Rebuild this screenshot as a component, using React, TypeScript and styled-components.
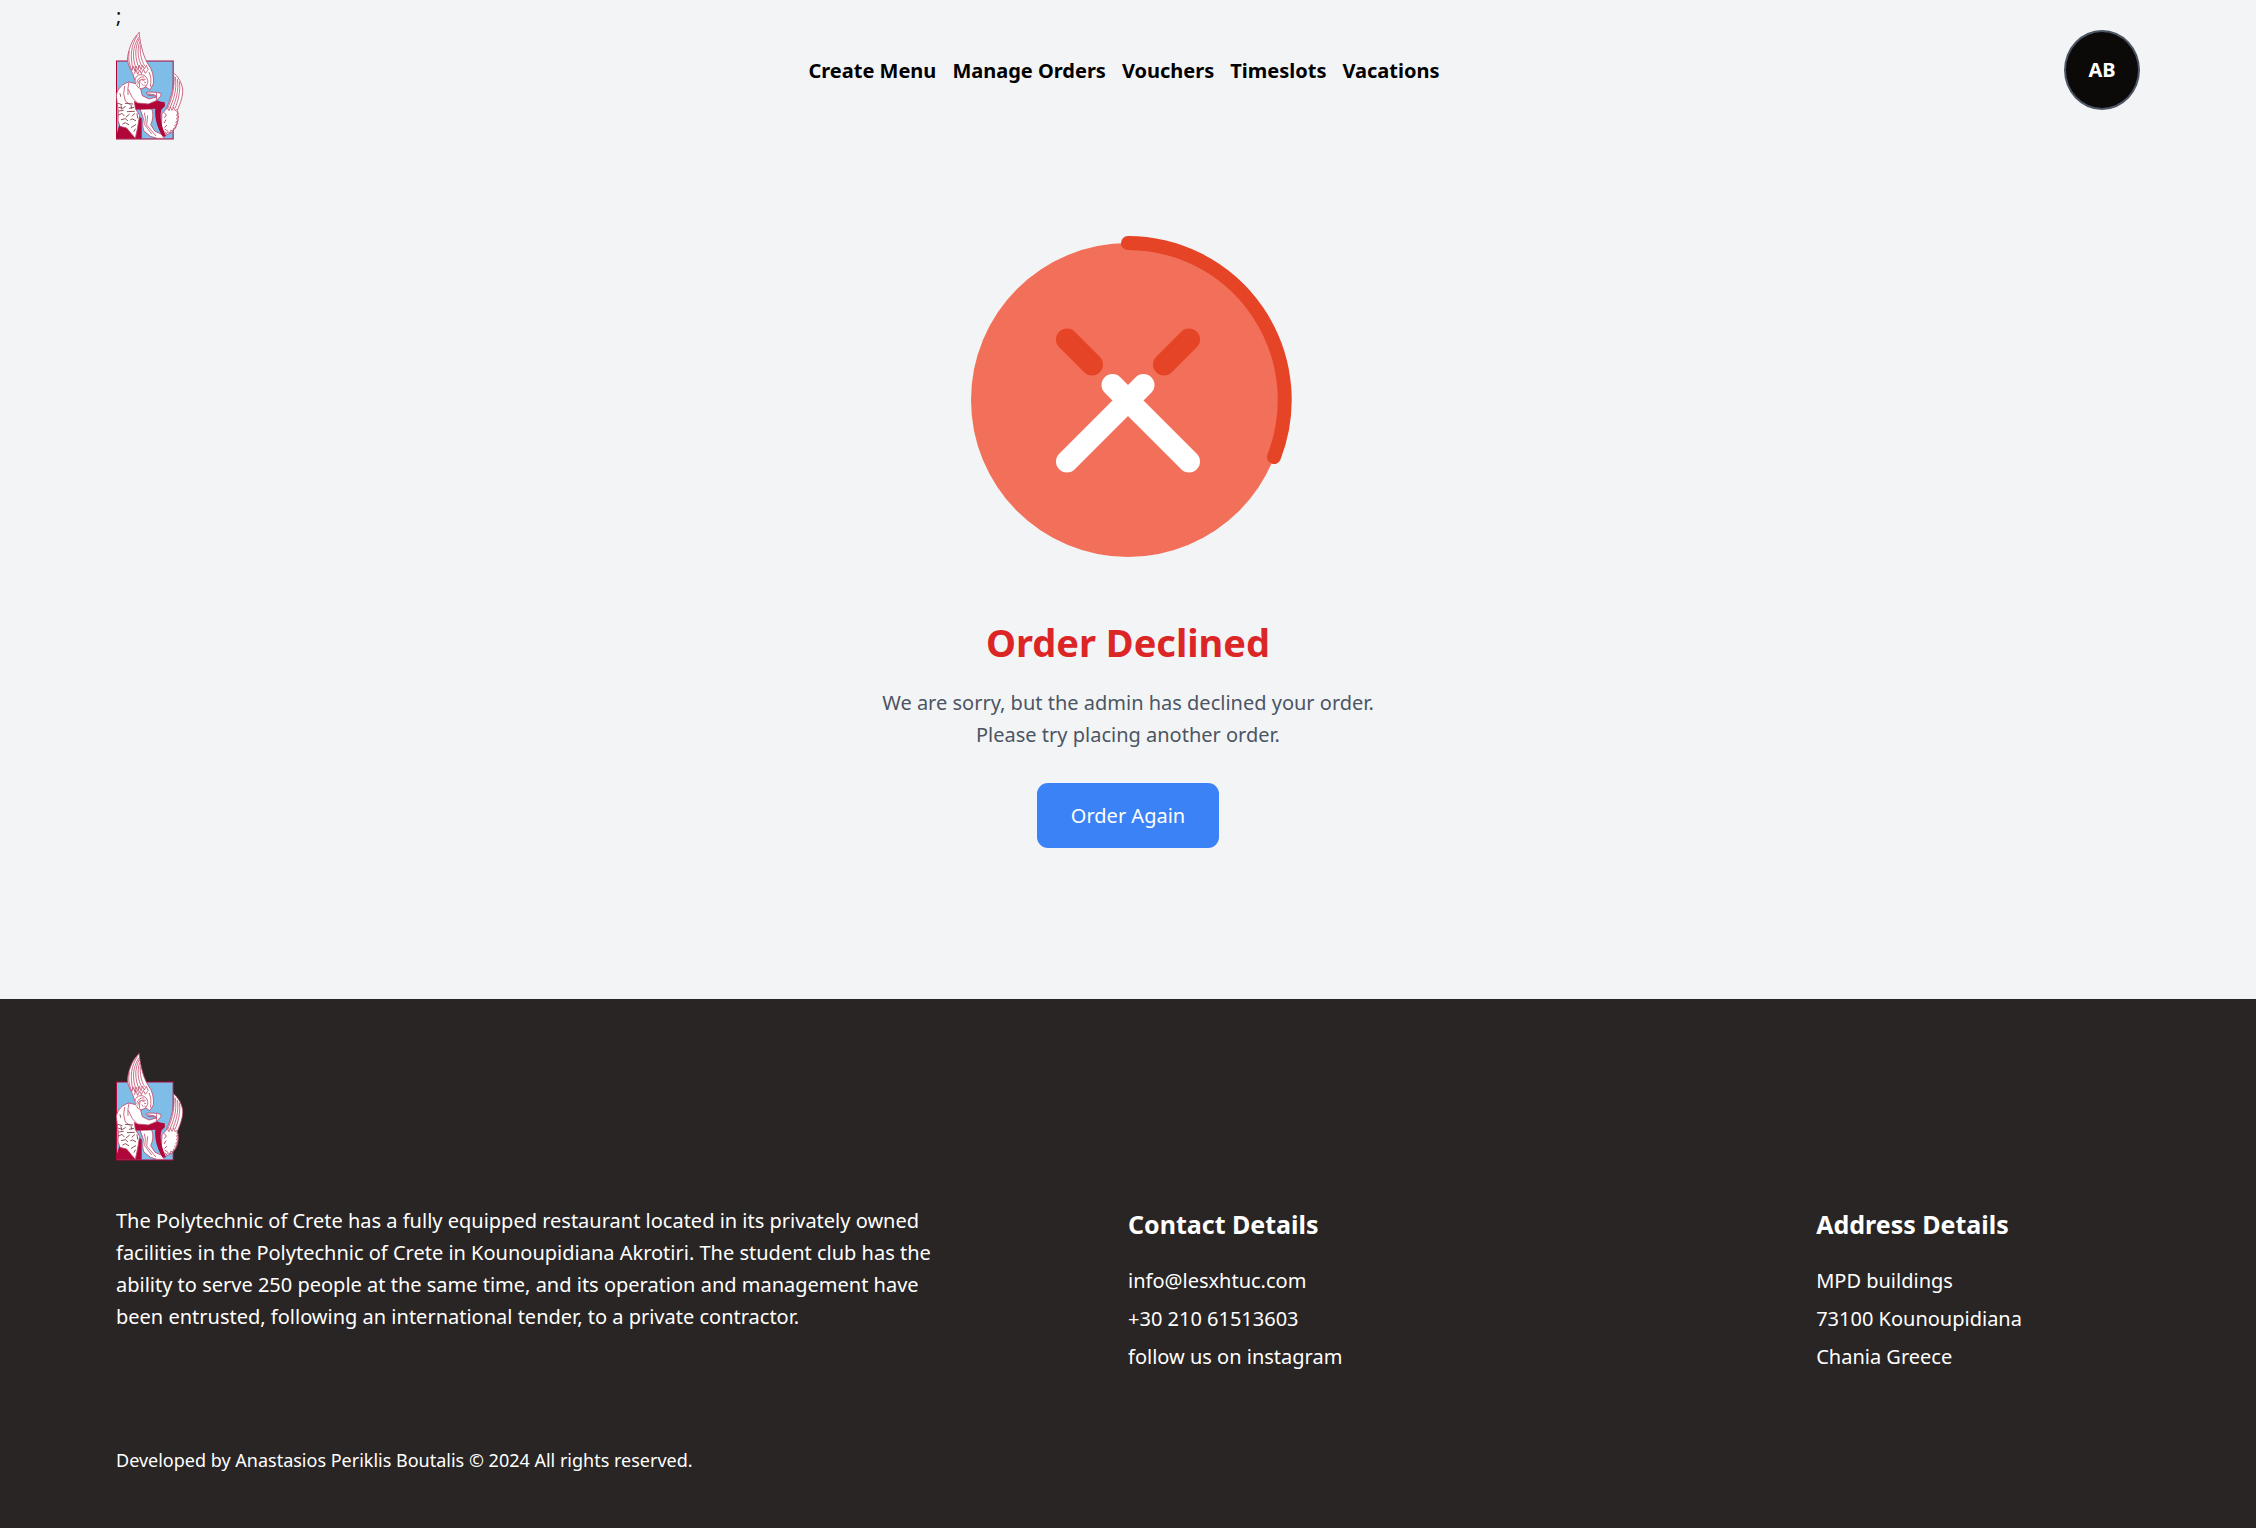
import React from "react";
import styled, { createGlobalStyle } from "styled-components";

const GlobalStyle = createGlobalStyle`
  *, *::before, *::after { box-sizing: border-box; }
  html, body, #root { min-height: 100vh; }
  body {
    margin: 0;
    background: #f3f4f6;
    color: #0c0a09;
    font-family: "Noto Sans", "Open Sans", sans-serif;
    font-size: 20px;
    line-height: 32px;
  }
  h1, h2, p, ul { margin: 0; padding: 0; }
  ul { list-style: none; }
  a { color: inherit; text-decoration: none; }
  svg { display: block; }
`;

const Page = styled.div`
  display: flex;
  flex-direction: column;
  min-height: 100vh;
`;

const Header = styled.header`
  display: grid;
  grid-template-columns: 1fr auto 1fr;
  align-items: start;
  height: 140px;
  padding: 0 116px;
`;

const Brand = styled.div`
  display: flex;
  flex-direction: column;
`;

const Nav = styled.nav`
  display: flex;
  gap: 16px;
  padding: 55px 8px 0 0;
  color: #000;
  font-weight: 700;
`;

const Avatar = styled.button`
  justify-self: end;
  width: 76px;
  height: 80px;
  margin-top: 30px;
  padding: 0;
  border: 2px solid #4b5563;
  border-radius: 50%;
  background: #0c0a09;
  color: #fff;
  font: inherit;
  font-weight: 700;
`;

const Main = styled.main`
  display: flex;
  flex: 1;
  flex-direction: column;
  align-items: center;
  padding: 92px 24px 150px;
  text-align: center;
`;

const Title = styled.h1`
  margin-top: 50px;
  color: #dc2626;
  font-size: 38px;
  line-height: 48px;
  font-weight: 700;
`;

const Message = styled.p`
  margin-top: 21px;
  color: #4b5563;
`;

const PrimaryButton = styled.button`
  margin-top: 32px;
  padding: 16px 34px;
  border: 0;
  border-radius: 11px;
  background: #3b82f6;
  color: #fff;
  font: inherit;
  line-height: 33px;
`;

const Footer = styled.footer`
  padding: 54px 116px;
  background: #292524;
  color: #fff;
`;

const Columns = styled.div`
  display: grid;
  grid-template-columns: 50% 34% 16%;
  margin-top: 44px;
`;

const About = styled.p`
  max-width: 840px;
`;

const ColumnTitle = styled.h2`
  margin-bottom: 22px;
  font-size: 25px;
  line-height: 38px;
  font-weight: 700;
`;

const Lines = styled.ul`
  display: grid;
  gap: 6px;
`;

const Copyright = styled.p`
  margin-top: 74px;
  font-size: 18px;
  line-height: 27px;
`;

const maroon = "#b0063a";
const sky = "#7dbde8";
const ink = "#c0476a";

const Logo = () => (
  <svg width="68" height="108" viewBox="48 95 204 324" role="img" aria-label="Polytechnic of Crete">
    <rect x="49.5" y="182" width="170" height="234" fill={sky} stroke={maroon} strokeWidth="3" />
    <g stroke={ink} strokeWidth="2.5" fill="#fff" strokeLinejoin="round" strokeLinecap="round">
      <path d="M117 97C99 113 88 139 83 169C80 188 92 207 98 219L104 238L127 254L150 268L160 250C162 228 156 208 147 196C132 174 122 140 117 97Z" />
      <path d="M220 217C226 250 213 292 199 326L186 340L184 380L196 405L210 399C232 386 239 355 232 330C243 304 249 286 248 266C244 243 232 226 220 217Z" />
      <path d="M121 326L155 326C162 343 157 363 152 373L165 393L190 404L192 414L171 414L151 408L131 391C124 367 134 359 128 348Z" />
    </g>
    <g fill={maroon}>
      <path d="M100 303L144 308L168 299L183 304L194 306L195 317L184 328C178 353 186 380 198 408L188 409C170 379 163 348 166 325L101 328Z" />
      <path d="M60 368L83 378L96 397L107 415L51 415V397Z" />
      <path d="M110 345L125 354V415L104 415Z" />
    </g>
    <g stroke={ink} strokeWidth="2.5" fill="#fff" strokeLinejoin="round" strokeLinecap="round">
      <path d="M49 284C53 265 66 251 87 245L107 250C101 235 110 222 126 223C139 226 145 237 143 249L136 261L122 266L127 286L147 296L170 290L163 283L139 280L141 275L172 276L184 280L182 287L169 301L145 311L112 308L103 303L106 325L119 345L112 386L106 414L94 400L80 383L60 378L54 361L55 335Z" />
    </g>
    <g fill="none" stroke={ink} strokeWidth="2.4">
      <path d="M112 105C94 134 89 164 99 206M116 110C98 140 96 170 108 204M117 116C104 145 104 170 117 203M119 124C111 151 113 174 126 199M121 135C119 157 124 181 134 196" />
      <path d="M88 153C83 180 90 196 96 211M221 226C226 268 212 303 203 324M226 230C232 270 219 302 210 322M232 236C238 269 226 304 218 322M238 244C243 270 233 308 225 323" />
      <path d="M96 209L101 198L105 213L109 198L114 210L118 195L123 208L128 195L133 206L139 195L145 209M103 221L108 208L113 222L119 209L124 220L130 207L136 219L143 210M147 215Q156 234 151 259" />
      <path d="M202 322L207 331L211 320L216 330L221 321L225 331L231 327M229 333L235 340L229 344L236 350L229 354L234 361L227 365L232 371L224 375L228 382L220 384L220 392L212 390L210 398L203 394L199 401L194 393" />
      <path d="M110 247Q116 227 133 230M113 252Q118 233 137 237M120 237L118 261M126 239L133 240M132 245L138 247M125 250L130 256M133 254L137 255M108 252L115 262L123 265" />
      <path d="M87 246Q82 263 84 284M74 257Q67 281 76 302L90 312M85 267L97 292L112 308M143 285L169 287M170 277L169 303M133 337Q139 352 134 373L155 401M143 345L140 374L168 407" />
    </g>
    <g fill="none" stroke="#8a4650" strokeWidth="2.8" strokeLinecap="round">
      <path d="M54 309L66 313M76 309L98 311M56 321L68 324L76 319M88 324L101 321M57 332L70 330M82 334L103 333M56 344L66 339L72 346M78 350L88 342M96 347L104 340M64 358L76 355L83 361M92 358L98 356L107 361M68 371L76 367L86 373M94 381L107 373M102 393L106 386M63 316L65 326M93 314L95 324M111 340L113 353M60 280L62 288" />
      <path d="M193 337L199 344L194 351M197 359L193 367M200 375L194 381M195 387L202 391" stroke={ink} />
    </g>
  </svg>
);

const DeclinedMark = () => (
  <svg width="336" height="336" viewBox="-168 -168 336 336" aria-hidden="true">
    <circle r="157" fill="#f26f5a" />
    <path d="M0-157A157 157 0 0 1 146 57" fill="none" stroke="#e64427" strokeWidth="14" strokeLinecap="round" />
    <g fill="none" strokeWidth="22" strokeLinecap="round">
      <path d="M-61-60.500L-36-35.500M61-60.500L36-35.500" stroke="#e64427" />
      <path d="M-61 61.500L15.500-15M61 61.500L-15.500-15" stroke="#fff" />
    </g>
  </svg>
);

const links = ["Create Menu", "Manage Orders", "Vouchers", "Timeslots", "Vacations"];

export default function App() {
  return (
    <Page>
      <GlobalStyle />
      <Header>
        <Brand>
          ;
          <a href="#home"><Logo /></a>
        </Brand>
        <Nav>
          {links.map((label) => (
            <a key={label} href="#menu">{label}</a>
          ))}
        </Nav>
        <Avatar type="button">AB</Avatar>
      </Header>
      <Main>
        <DeclinedMark />
        <Title>Order Declined</Title>
        <Message>
          We are sorry, but the admin has declined your order.
          <br />
          Please try placing another order.
        </Message>
        <PrimaryButton type="button">Order Again</PrimaryButton>
      </Main>
      <Footer>
        <Logo />
        <Columns>
          <About>
            The Polytechnic of Crete has a fully equipped restaurant located in its privately owned
            facilities in the Polytechnic of Crete in Kounoupidiana Akrotiri. The student club has the
            ability to serve 250 people at the same time, and its operation and management have been
            entrusted, following an international tender, to a private contractor.
          </About>
          <section>
            <ColumnTitle>Contact Details</ColumnTitle>
            <Lines>
              <li>info@lesxhtuc.com</li>
              <li>+30 210 61513603</li>
              <li><a href="#instagram">follow us on instagram</a></li>
            </Lines>
          </section>
          <section>
            <ColumnTitle>Address Details</ColumnTitle>
            <Lines>
              <li>MPD buildings</li>
              <li>73100 Kounoupidiana</li>
              <li>Chania Greece</li>
            </Lines>
          </section>
        </Columns>
        <Copyright>Developed by Anastasios Periklis Boutalis © 2024 All rights reserved.</Copyright>
      </Footer>
    </Page>
  );
}
